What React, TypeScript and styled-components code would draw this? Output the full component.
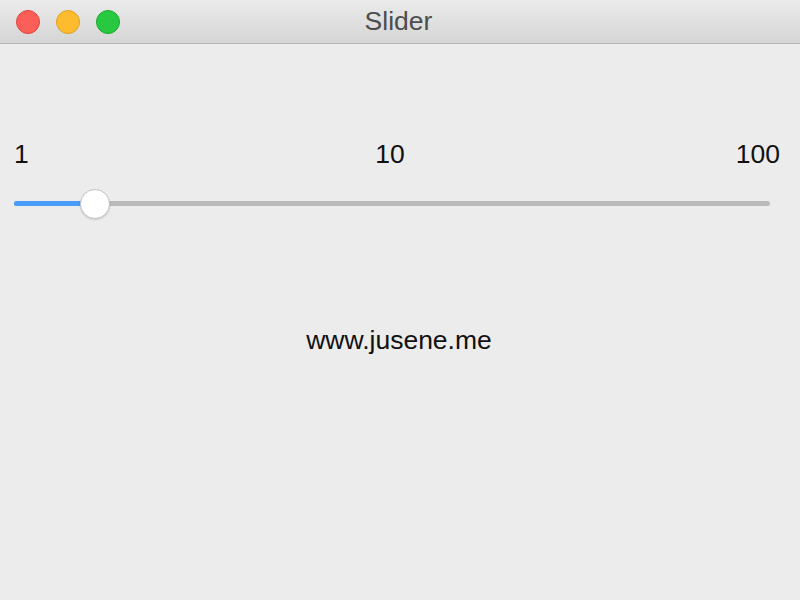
import React from 'react';
import styled, { createGlobalStyle } from 'styled-components';

const Global = createGlobalStyle`
  html, body {
    margin: 0;
    padding: 0;
    background: #ececec;
    font-family: "Liberation Sans", "Helvetica Neue", Arial, sans-serif;
  }
`;

const Window = styled.div`
  width: 800px;
  height: 600px;
  display: flex;
  flex-direction: column;
  background: #ececec;
  border-radius: 5px 5px 0 0;
  overflow: hidden;
`;

const TitleBar = styled.div`
  position: relative;
  height: 43px;
  flex-shrink: 0;
  display: flex;
  align-items: center;
  justify-content: center;
  background: linear-gradient(#ebebeb, #d5d5d5);
  border-bottom: 1px solid #b4b4b4;
`;

const Lights = styled.div`
  position: absolute;
  left: 16px;
  top: 10px;
  display: flex;
  gap: 16px;
`;

const Light = styled.span<{ $fill: string; $edge: string }>`
  width: 24px;
  height: 24px;
  border-radius: 50%;
  box-sizing: border-box;
  background: ${p => p.$fill};
  border: 1px solid ${p => p.$edge};
`;

const Title = styled.div`
  font-size: 26.5px;
  color: #4d4d4d;
  margin-left: -3px;
`;

const Body = styled.div`
  display: flex;
  flex-direction: column;
  padding: 95px 20px 0 14px;
`;

const Labels = styled.div`
  display: grid;
  grid-template-columns: 1fr auto 1fr;
  font-size: 26.5px;
  color: #111;
  line-height: 30px;
`;

const Label = styled.span<{ $align: 'left' | 'center' | 'right' }>`
  text-align: ${p => p.$align};
  margin-left: ${p => (p.$align === 'center' ? '-14px' : '0')};
`;

const Track = styled.div`
  position: relative;
  margin-top: 32px;
  height: 5px;
  width: 756px;
  border-radius: 3px;
  background: #bababa;
`;

const Fill = styled.div`
  height: 100%;
  border-radius: 3px;
  background: #4a9cf9;
`;

const Thumb = styled.div`
  position: absolute;
  top: 50%;
  width: 30px;
  height: 30px;
  border-radius: 50%;
  background: #fff;
  border: 1px solid #c4c4c4;
  box-sizing: border-box;
  box-shadow: 0 1px 2px rgba(0, 0, 0, 0.15);
  transform: translate(-50%, -50%);
`;

const Link = styled.div`
  margin-top: 119px;
  text-align: center;
  font-size: 26.5px;
  color: #111;
  padding-left: 4px;
`;

export default function App() {
  const pos = 81;
  return (
    <Window>
      <Global />
      <TitleBar>
        <Lights>
          <Light $fill="#fc5f57" $edge="#e0443e" />
          <Light $fill="#fdbc2e" $edge="#dea123" />
          <Light $fill="#28c840" $edge="#1aab29" />
        </Lights>
        <Title>Slider</Title>
      </TitleBar>
      <Body>
        <Labels>
          <Label $align="left">1</Label>
          <Label $align="center">10</Label>
          <Label $align="right">100</Label>
        </Labels>
        <Track>
          <Fill style={{ width: pos }} />
          <Thumb style={{ left: pos }} />
        </Track>
        <Link>www.jusene.me</Link>
      </Body>
    </Window>
  );
}
